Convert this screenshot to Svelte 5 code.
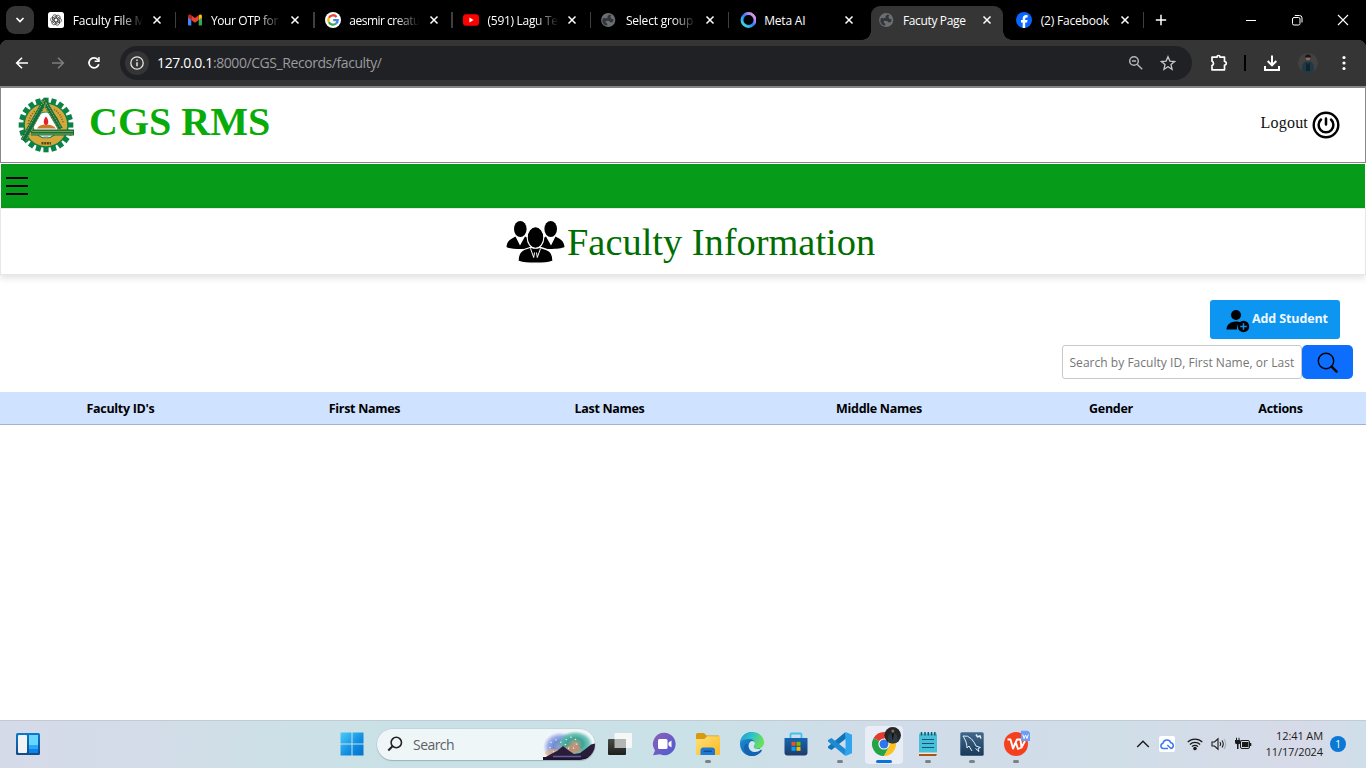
<script>
  const tabs = [
    { icon: 'gpt', title: 'Faculty File M', fade: true, ls: -0.2, sep: true },
    { icon: 'gmail', title: 'Your OTP for', fade: true, ls: -0.4, sep: true },
    { icon: 'google', title: 'aesmir creatu', fade: true, ls: -0.5, sep: true },
    { icon: 'youtube', title: '(591) Lagu Te', fade: true, ls: -0.3, sep: true },
    { icon: 'globe', title: 'Select group', fade: true, ls: -0.2, sep: true },
    { icon: 'meta', title: 'Meta AI', ls: -0.2 },
    { icon: 'globe', title: 'Facuty Page', ls: -0.36, active: true },
    { icon: 'facebook', title: '(2) Facebook', ls: -0.2, sep: true }
  ];
  const columns = ["Faculty ID's", 'First Names', 'Last Names', 'Middle Names', 'Gender', 'Actions'];
  const teeth = Array.from({ length: 20 }, (_, i) => i * 18);
  const sparks = Array.from({ length: 7 }, (_, i) => i * 51);
</script>

{#snippet favicon(name)}
  <svg class="fav" viewBox="0 0 16 16">
    {#if name === 'gpt'}
      <rect width="16" height="16" rx="2.500" fill="#fff" />
      <g fill="none" stroke="#333" stroke-width=".75">
        {#each [0, 60, 120, 180, 240, 300] as a}
          <path d="M8 5.700 10 6.900V10.400a2.200 2.200 0 0 0 3.300-2.200 2.300 2.300 0 0 0-.5-1.400L9.600 5" transform="rotate({a} 8 8)" />
        {/each}
      </g>
    {:else if name === 'gmail'}
      <path d="M1 3.500v9.200c0 .5.4.8.8.8H4.300V6.500z" fill="#4285f4" />
      <path d="M15 3.500v9.200c0 .5-.4.8-.8.8H11.700V6.500z" fill="#34a853" />
      <path d="M11.700 3.500V8L15 5.600V4.200c0-1.600-1.800-2.200-2.800-1.300z" fill="#fbbc04" />
      <path d="M4.300 3.300 8 6.100l3.700-2.800V8L8 10.800 4.300 8z" fill="#ea4335" />
      <path d="M1 4.200V5.600L4.300 8V3.400l-.5-.5C2.800 2.100 1 2.700 1 4.200z" fill="#c5221f" />
    {:else if name === 'google'}
      <circle cx="8" cy="8" r="8" fill="#fff" />
      <g fill="none" stroke-width="2.300">
        <path d="M11.600 4.900A4.700 4.700 0 0 0 3.900 5.700" stroke="#ea4335" />
        <path d="M3.900 5.700a4.700 4.700 0 0 0 0 4.600" stroke="#fbbc05" />
        <path d="M3.900 10.300a4.700 4.700 0 0 0 7.200 1.200" stroke="#34a853" />
        <path d="M11.100 11.500A4.600 4.600 0 0 0 12.700 8.200H8.200" stroke="#4285f4" />
      </g>
    {:else if name === 'youtube'}
      <rect y="2.300" width="16" height="11.400" rx="3" fill="#f00" />
      <path d="m6.400 5.600 4.200 2.400-4.200 2.400z" fill="#fff" />
    {:else if name === 'globe'}
      <circle cx="7.200" cy="8" r="7.100" fill="#6b6f73" />
      <path d="M8.500 2.500 6.300 4.300 7 5.500 5 6.300 2 6 1.300 8.600c0 3 2.500 5.200 5 5V11.800L4.500 10.300 5.300 8.700 8 9 9.500 10.500 12 10 12.600 7.300 10.500 6.800 9.300 5 10.500 3.300z" fill="#26282b" opacity=".8" />
    {:else if name === 'meta'}
      <defs>
        <linearGradient id="meta" x1="0" y1="1" x2="1" y2="0">
          <stop offset="0" stop-color="#52f0c8" /><stop offset=".25" stop-color="#30b9ee" />
          <stop offset=".5" stop-color="#2b7bff" /><stop offset=".75" stop-color="#b18cf5" /><stop offset="1" stop-color="#f5a8e4" />
        </linearGradient>
      </defs>
      <circle cx="8.500" cy="8" r="6.500" fill="none" stroke="url(#meta)" stroke-width="2.900" />
    {:else}
      <circle cx="8" cy="8" r="8" fill="#0866ff" />
      <path d="M6.700 16V10.500H5V8h1.700V6.900c0-2.600 1.200-3.800 3.600-3.800.4 0 1 .1 1.300.2v2.200h-.9c-1.100 0-1.500.5-1.500 1.500v1h2.300l-.4 2.500H9.200V16z" fill="#fff" />
    {/if}
  </svg>
{/snippet}

<div class="screen">
  <div class="tabstrip">
    <button class="tabsearch" aria-label="Search tabs">
      <svg width="10" height="8" viewBox="0 0 10 8"><path d="M1.500 2 5 5.500 8.500 2" fill="none" stroke="#fff" stroke-width="1.700" /></svg>
    </button>
    {#each tabs as t}
      <div class="tab" class:active={t.active} class:sep={t.sep}>
        {@render favicon(t.icon)}
        <span class="title" class:fade={t.fade} style="letter-spacing:{t.ls}px">{t.title}</span>
        <svg class="x" width="10" height="10" viewBox="0 0 10 10"><path d="m1.500 1.500 7 7m0-7-7 7" stroke="#fff" stroke-width="1.500" /></svg>
      </div>
    {/each}
    <svg class="plus" width="12" height="12" viewBox="0 0 12 12"><path d="M6 .8v10.400M.8 6h10.400" stroke="#fff" stroke-width="1.500" /></svg>
    <div class="winctl">
      <svg width="12" height="12" viewBox="0 0 12 12"><path d="M1 6.500h10" stroke="#fff" /></svg>
      <svg width="12" height="12" viewBox="0 0 12 12" fill="none" stroke="#fff"><rect x="1.500" y="3.500" width="7.500" height="7.500" rx="1.500" /><path d="M3.800 1.500H8.500Q11 1.500 11 4V8.500" /></svg>
      <svg width="12" height="12" viewBox="0 0 12 12"><path d="m1 1 10 10M11 1 1 11" stroke="#fff" stroke-width="1.100" /></svg>
    </div>
  </div>

  <div class="toolbar">
    <svg class="nav" viewBox="0 0 16 16"><path d="M14 8H3M8 2.700 2.700 8 8 13.300" fill="none" stroke="#fff" stroke-width="1.600" /></svg>
    <svg class="nav" viewBox="0 0 16 16"><path d="M2 8h11M8 2.700 13.300 8 8 13.300" fill="none" stroke="#7d7d7d" stroke-width="1.600" /></svg>
    <svg class="nav" viewBox="0 0 16 16"><path d="M12.800 9.300A5 5 0 1 1 11.800 4.600L13 6" fill="none" stroke="#fff" stroke-width="1.700" /><path d="M13.700 2v5H8.700V5.500H12.200V2z" fill="#fff" /></svg>
    <div class="omni">
      <span class="info"><svg width="16" height="16" viewBox="0 0 16 16"><circle cx="8" cy="8" r="6.200" fill="none" stroke="#e8e8e8" stroke-width="1.300" /><path d="M8 7.200v4M8 4.500v1.500" stroke="#e8e8e8" stroke-width="1.500" /></svg></span>
      <span class="url"><b>127.0.0.1</b>:8000/CGS_Records/faculty/</span>
      <svg class="om1" width="16" height="16" viewBox="0 0 16 16" fill="none" stroke="#b4b5b7" stroke-width="1.500"><circle cx="6" cy="6" r="4.300" /><path d="m9.200 9.200 5 5M4 6h4" /></svg>
      <svg width="16" height="16" viewBox="0 0 16 16"><path d="m8 1.700 1.900 4.400 4.700.4-3.600 3.100 1.100 4.700L8 11.800l-4.100 2.500L5 9.600 1.400 6.500l4.700-.4z" fill="none" stroke="#c6c7c9" stroke-width="1.300" /></svg>
    </div>
    <svg class="ext" width="18" height="18" viewBox="0 0 18 18"><path d="M2 3.200H7V3a1.500 1.500 0 0 1 3 0v.2h4.500V7.500a1.800 1.800 0 0 1 0 3.600v4.700H2V11.600A2.300 2.300 0 0 0 2 7.300z" fill="none" stroke="#fff" stroke-width="1.700" stroke-linejoin="round" /></svg>
    <i class="vbar"></i>
    <svg class="dl" width="18" height="18" viewBox="0 0 18 18"><path d="M9 1.500v9.500M4.700 7 9 11.300 13.300 7M2 12v4h14v-4" fill="none" stroke="#fff" stroke-width="2" /></svg>
    <svg class="ava" width="20" height="20" viewBox="0 0 20 20"><circle cx="10" cy="10" r="10" fill="#424242" /><path d="M4.500 18c-1-5-.5-8 3.500-9.500h4c4 1.500 4.500 4.500 3.500 9.500-3 2.500-8 2.500-11 0z" fill="#1d3a46" /><path d="M8 9l2 3 2-3v9H8z" fill="#14222a" /><circle cx="10" cy="5" r="2.400" fill="#94685c" /><path d="M7 4.500C7 .5 13 .5 13 4.500z" fill="#151515" /></svg>
    <svg class="dots" width="4" height="16" viewBox="0 0 4 16" fill="#fff"><circle cx="2" cy="2.500" r="1.600" /><circle cx="2" cy="8" r="1.600" /><circle cx="2" cy="13.500" r="1.600" /></svg>
  </div>

  <header>
    <svg class="seal" width="56" height="56" viewBox="0 0 56 56">
      {#each teeth as a}<rect x="25.400" y=".7" width="5.200" height="6" fill="#0a8245" transform="rotate({a} 28 28)" />{/each}
      <circle cx="28" cy="28" r="22.700" fill="#0a8245" />
      <circle cx="28" cy="28" r="21.200" fill="#d4a83a" />
      <circle cx="28" cy="28" r="13.300" fill="#0a8245" />
      <circle cx="28" cy="28" r="12.500" fill="#fff" />
      <path d="M18 32 28 17l10 15z" fill="#fff" />
      <path d="M19 31.500q2-4 9-4t10 4z" fill="#c97a28" />
      <path d="M28 19.500c3.500 4 2.500 8.500 0 8.500s-3.500-4.500 0-8.500z" fill="#e2222b" />
      <g fill="none" stroke="#0e7040">
        <path d="M25 2 42.500 32" stroke-width="5" />
        <path d="M27 4 5 43.500" stroke-width="5.500" />
        <path d="M13 35.500h43" stroke-width="6" />
      </g>
      <g fill="none" stroke="#d2b552" stroke-width=".7">
        <path d="M26 2.500 43.500 32M23.500 3 41 33M25.500 4 3.500 43M28.500 6 8 43.500" stroke-dasharray="2 1" />
        <path d="M14 34.400h41M12.500 37h42.500" />
      </g>
      <path d="M10.500 27A18 18 0 0 1 17 14" stroke="#7c6a26" stroke-width="2" stroke-dasharray="1 1.700" fill="none" />
      <path d="M36 12.500q7 4 9 13" stroke="#7c6a26" stroke-width="1.800" stroke-dasharray="1 1.500" fill="none" />
      <path d="M25.500 40h5" stroke="#777" stroke-width="1" />
      <path d="M23.500 46.300h9.500" stroke="#4b4520" stroke-width="2.600" stroke-dasharray="2 .7" />
    </svg>
    <h1>CGS RMS</h1>
    <a class="logout" href="#logout">Logout</a>
    <svg class="power" width="28" height="28" viewBox="0 0 28 28" fill="none" stroke="#000"><circle cx="14" cy="14" r="12.300" stroke-width="2.400" /><path d="M9 8.500a7.400 7.400 0 1 0 10 0M14 7.500v6" stroke-width="2.500" stroke-linecap="round" /></svg>
  </header>
  <nav class="green">
    <svg width="22" height="20" viewBox="0 0 22 20"><path d="M0 2h22M0 10h22M0 18h22" stroke="#000" stroke-width="2" /></svg>
  </nav>
  <section class="heading">
    <svg width="60" height="44" viewBox="0 0 60 44">
      <g>
        <ellipse cx="14.300" cy="9" rx="6.300" ry="8" fill="#000" />
        <path d="M.5 27C1 20.500 5 19 9.500 16.500L14 25.500 19 16.500 27 21v7.500C15 29.500 4 29 .5 27z" fill="#000" />
      </g>
      <g transform="matrix(-1 0 0 1 59 0)">
        <ellipse cx="14.300" cy="9" rx="6.300" ry="8" fill="#000" />
        <path d="M.5 27C1 20.500 5 19 9.500 16.500L14 25.500 19 16.500 27 21v7.500C15 29.500 4 29 .5 27z" fill="#000" />
      </g>
      <path d="M12 41C12 31 17 29.500 24 27.500h10.500C42 29.500 47 31 47 41c-7 3-28 3-35 0z" fill="#000" stroke="#fff" stroke-width="1.300" />
      <ellipse cx="29.500" cy="17.500" rx="8.300" ry="10.700" fill="#000" stroke="#fff" stroke-width="1.100" />
      <path d="M24.500 28.500 27.700 37.500l.8-5M34.500 28.500 31.300 37.500l-.8-5" fill="none" stroke="#fff" stroke-width="1" />
    </svg>
    <h2>Faculty Information</h2>
  </section>

  <main>
    <button class="add">
      <svg width="24" height="24" viewBox="0 0 24 24"><circle cx="10" cy="6" r="5" /><path d="M.5 20.500c0-5 4-8 9.500-8 2 0 3.500.3 5 1.200a6.400 6.400 0 0 0-4 6.800z" /><circle cx="17.500" cy="17.500" r="5.700" /><path d="M17.500 14.200v6.600M14.200 17.500h6.600" stroke="#0d95f2" stroke-width="1.500" /></svg>
      <span>Add Student</span>
    </button>
    <div class="search">
      <div class="field">Search by Faculty ID, First Name, or Last</div>
      <button class="go" aria-label="Search"><svg width="22" height="22" viewBox="0 0 22 22" fill="none" stroke="#000"><circle cx="9" cy="9" r="7.700" stroke-width="1.400" /><path d="m14.600 14.600 5 5" stroke-width="2.400" stroke-linecap="round" /></svg></button>
    </div>
    <div class="thead">
      {#each columns as c}<span>{c}</span>{/each}
    </div>
  </main>

  <footer>
    <svg class="widgets" width="24" height="22" viewBox="0 0 24 22">
      <defs><linearGradient id="wd" x1="0" y1="0" x2="0" y2="1"><stop offset="0" stop-color="#0b79d0" /><stop offset="1" stop-color="#134a87" /></linearGradient></defs>
      <rect width="24" height="22" rx="1.500" fill="url(#wd)" /><rect x="2" y="2" width="9" height="18" rx="1" fill="#f3f3f3" /><rect x="13" y="2" width="9" height="10" fill="#67d7fe" /><rect x="13" y="12" width="9" height="4" fill="#28a8f8" /><rect x="13" y="16" width="9" height="4" fill="#0a83ea" />
    </svg>
    <svg class="start" width="24" height="24" viewBox="0 0 24 24">
      <defs><linearGradient id="win" x1="0" y1="0" x2="1" y2="1"><stop offset="0" stop-color="#4ccbfb" /><stop offset=".6" stop-color="#0f8ce0" /><stop offset="1" stop-color="#0470cb" /></linearGradient></defs>
      <path d="M.5.500h11v11h-11zM12.500.5h11v11h-11zM.5 12.500h11v11H.5zM12.500 12.500h11v11h-11z" fill="url(#win)" />
    </svg>
    <div class="pill">
      <svg width="16" height="16" viewBox="0 0 16 16"><circle cx="9.300" cy="6.500" r="5.200" fill="none" stroke="#222" stroke-width="1.600" /><path d="M5.500 10.300 1.300 14.500" stroke="#222" stroke-width="2" /></svg>
      <span>Search</span>
      <svg class="art" width="52" height="31" viewBox="0 0 52 31">
        <defs>
          <radialGradient id="a1"><stop offset="0" stop-color="#a8a0b8" /><stop offset=".4" stop-color="#6d8cd6" /><stop offset=".7" stop-color="#7b90e0" stop-opacity=".75" /><stop offset="1" stop-color="#8f9cea" stop-opacity="0" /></radialGradient>
          <radialGradient id="a2"><stop offset="0" stop-color="#c99b80" /><stop offset=".45" stop-color="#3ba596" /><stop offset=".75" stop-color="#52b5a8" stop-opacity=".8" /><stop offset="1" stop-color="#45bba8" stop-opacity="0" /></radialGradient>
        </defs>
        <ellipse cx="17" cy="18" rx="17" ry="15" fill="url(#a1)" /><ellipse cx="32" cy="15" rx="18" ry="13" fill="url(#a2)" />
        <ellipse cx="10" cy="24" rx="8" ry="4" fill="#eab070" opacity=".6" /><ellipse cx="30" cy="20" rx="8" ry="4" fill="#e58a70" opacity=".7" />
        <g stroke="#fff2c8" stroke-width="1">
          {#each sparks as a}<path d="M13 11.500V10" transform="rotate({a} 13 17)" /><path d="M28 9V7.500" transform="rotate({a} 28 14)" />{/each}
        </g>
        <path d="M0 29.500 8 25l6-3 6-5 5 4 6 4 6-1 6-4.500 5-4 4-1V29.500z" fill="#2a1d3c" /><path d="M0 28h46q-3 3-8 3H0z" fill="#1d1830" /><path d="M10 27.500h28" stroke="#6a5c98" stroke-width="1.300" fill="none" />
      </svg>
    </div>

    <div class="apps">
      <span class="app"><svg width="24" height="24" viewBox="0 0 24 24"><defs><linearGradient id="tv" x1="0" y1="0" x2="0" y2="1"><stop offset="0" stop-color="#4a4a48" /><stop offset="1" stop-color="#1e1e1c" /></linearGradient></defs><rect x="6.500" y="1" width="17.500" height="15" rx="1" fill="#f7f7f7" /><rect x="0" y="7" width="18" height="16" rx="1" fill="url(#tv)" /><path d="M6.500 7H18v9H6.500z" fill="#b4b6b6" /></svg></span>
      <span class="app"><svg width="24" height="24" viewBox="0 0 24 24"><defs><linearGradient id="ch" x1="0" y1="0" x2="1" y2="1"><stop offset="0" stop-color="#8d5fb5" /><stop offset="1" stop-color="#4c5bd4" /></linearGradient></defs><path d="M12.500.8a11.200 11.200 0 1 1-4.500 21.500L1 23.300 3 18.500A11.200 11.200 0 0 1 12.500.8z" fill="url(#ch)" /><rect x="6" y="7" width="9.500" height="10" rx="1.500" fill="#fff" /><path d="m16.500 10.500 3-2v7l-3-2z" fill="#fff" /></svg></span>
      <span class="app run"><svg width="24" height="24" viewBox="0 0 24 24"><defs><linearGradient id="fo" x1="0" y1="0" x2="1" y2="1"><stop offset="0" stop-color="#ffe07a" /><stop offset="1" stop-color="#fbb920" /></linearGradient></defs><path d="M0 2.500Q0 1 1.500 1H8l2.500 2.500H23v6H0z" fill="#d79a12" /><path d="M0 7h8.500L11 4.300h12q1 0 1 1V22q0 1-1 1H1q-1 0-1-1z" fill="url(#fo)" /><path d="M4.500 23v-4.500q0-3 3-3h8.500q3 0 3 3V23z" fill="#1f77d0" /><rect x="7.500" y="18.500" width="8.500" height="1.600" rx=".8" fill="#114f95" /></svg></span>
      <span class="app"><svg width="24" height="24" viewBox="0 0 24 24"><defs><linearGradient id="e1" x1="0" y1="0" x2="1" y2=".4"><stop offset="0" stop-color="#1b9ad8" /><stop offset=".5" stop-color="#2fc2c8" /><stop offset="1" stop-color="#6ae05a" /></linearGradient><linearGradient id="e2" x1="0" y1="0" x2="1" y2="1"><stop offset="0" stop-color="#2195dc" /><stop offset="1" stop-color="#0c4f9c" /></linearGradient></defs><path d="M0 12C0 5 5 0 12 0s8 24 10.500 17.500C20.500 21.500 16.500 24 12 24 5 24 0 18.500 0 12z" fill="url(#e2)" /><path d="M.2 10C1.500 4 6 0 12 0c7 0 12 5 12 10.500 0 4-3 6.200-6.200 6.200-2.600 0-4-1-4-1.800s1.200-1.300 1.200-3.200C15 9 12.500 7 9 7 5 7 1.500 8.500.2 10z" fill="url(#e1)" /><path d="M15 11.500c0 2-1.200 2.500-1.200 3.400 0 .9 1.500 2 4 2 1.800 0 3.300-.6 4.400-1.500-1.500 3.400-5 5-8.200 4.600-3.500-.5-5.500-3.500-5.500-6.300 0-2.400 1.500-4.200 3.500-4.700 2 .2 3 1.200 3 2.500z" fill="#d3e6ed" /><path d="M8.500 11.500c-1.500 5 1.500 9 5.500 9 3 .3 6-.7 8.300-3.200C20.300 21.300 16.500 24 12 24 6 24 3 19 4 15c.5-2 2-3.200 4.500-3.500z" fill="#1464b4" /></svg></span>
      <span class="app"><svg width="24" height="24" viewBox="0 0 24 24"><defs><linearGradient id="st" x1="0" y1="0" x2="0" y2="1"><stop offset="0" stop-color="#1268b4" /><stop offset="1" stop-color="#203a68" /></linearGradient></defs><path d="M6.500 7V2.500q0-1 1-1h9q1 0 1 1V7" fill="none" stroke="#3cc4f0" stroke-width="1.800" /><path d="M.5 6h23v14.500q0 3-3 3h-17q-3 0-3-3z" fill="url(#st)" /><path d="M7.500 9.800h4v4h-4z" fill="#f25022" /><path d="M12.500 9.800h4v4h-4z" fill="#7fba00" /><path d="M7.500 14.800h4v4h-4z" fill="#00a4ef" /><path d="M12.500 14.800h4v4h-4z" fill="#ffb900" /></svg></span>
      <span class="app run"><svg width="24" height="24" viewBox="0 0 24 24"><path d="M17.500 0 18 6.500 3.500 18 0 16v-1.500z" fill="#1173b8" /><path d="M17.500 24 18 17.500 3.500 6 0 8v1.500z" fill="#1e8ad2" /><path d="m17.500 0 6.500 2.700v18.600L17.500 24z" fill="#2fa5ee" /></svg></span>
      <span class="app cur"><svg width="38" height="38" viewBox="0 0 38 38">
        <path d="M19 19 8.600 13A12 12 0 0 1 29.400 13z" fill="#e33b2e" /><path d="M19 19 8.600 13A12 12 0 0 0 19 31l5-9z" fill="#24a347" /><path d="M19 31a12 12 0 0 0 10.400-18H19l5 9z" fill="#fcc31e" /><circle cx="19" cy="19" r="5.600" fill="#fff" /><circle cx="19" cy="19" r="4.500" fill="#2f76ea" />
        <circle cx="27.700" cy="10.300" r="8.300" fill="#262626" /><path d="M23 17c-.5-5 .5-8 3-8.500h3.500c2.500.5 3.500 3.500 3 8.500q-4.500 2.500-9.500 0z" fill="#2c3c44" /><path d="m26.500 8.500 1.300 7 1.300-7z" fill="#111" /><circle cx="27.800" cy="6" r="1.500" fill="#8a685c" /></svg></span>
      <span class="app run"><svg width="24" height="24" viewBox="0 0 24 24"><rect x="3" y="1.500" width="18" height="20" rx="1" fill="#45bfda" /><path d="M5.500 0v3.500M9 0v3.500M12.300 0v3.500M15.600 0v3.500M18.800 0v3.500" stroke="#14576c" stroke-width="1.500" /><path d="M6 7.500h12M6 11.500h12M6 15.500h12" stroke="#14576c" stroke-width="1.200" /><path d="M3 20.500h18V22H3z" fill="#f3e7d3" /><path d="M3 22h18l-1 2H3z" fill="#a9531c" /></svg></span>
      <span class="app run"><svg width="24" height="24" viewBox="0 0 24 24"><defs><linearGradient id="my" x1="0" y1="0" x2="0" y2="1"><stop offset="0" stop-color="#40688c" /><stop offset="1" stop-color="#183a5a" /></linearGradient></defs><rect x=".3" y=".3" width="23.400" height="23.400" rx="1.500" fill="url(#my)" /><path d="M3 4q5-1 8.500 3T16 14l4.500 1.500-2.500 1 1 3-3.500-3M3 4q2 3 3 6t1 6l2-2 3 5" fill="none" stroke="#e4edf4" stroke-width="1" /><path d="m16 2.500 1.500 2.300L20 4l1 2.500" stroke="#e4edf4" stroke-width="1.500" fill="none" /></svg></span>
      <span class="app run"><svg width="28" height="28" viewBox="0 0 28 28"><circle cx="14" cy="14" r="12" fill="#f5401f" /><path d="M5.500 9.500h3l2.500 9 4-9h3.500l1 8 3.500-6.500M11 18.500l2-5M19.500 17.500 16 19l-2-6" fill="none" stroke="#fff" stroke-width="1.900" stroke-linejoin="round" /><path d="M19 .8h7l2 2V11h-9z" fill="#6b9ff5" /><path d="m20.800 4.500 1.300 4 1.400-3.500L25 8.500l1.300-4" fill="none" stroke="#fff" stroke-width="1" /></svg></span>
    </div>

    <div class="tray">
      <svg width="14" height="10" viewBox="0 0 14 10"><path d="M1.200 8 7 2.200 12.800 8" fill="none" stroke="#1b1b1b" stroke-width="1.400" /></svg>
      <svg class="cloud" width="16" height="16" viewBox="0 0 16 16"><rect width="16" height="16" rx="2" fill="#fff" /><path d="M9 12.500H4.200A2.700 2.700 0 0 1 4 7.200a4 4 0 0 1 7.700-.4A2.900 2.900 0 0 1 12 12.500L8.300 9" fill="none" stroke="#3a78f2" stroke-width="1.500" stroke-linejoin="round" /></svg>
      <svg class="wifi" width="16" height="14" viewBox="0 0 16 14" fill="none" stroke="#1b1b1b" stroke-width="1.200"><path d="M.7 5.200a10.300 10.300 0 0 1 14.600 0M2.900 7.500a7.200 7.200 0 0 1 10.200 0M5 9.700a4.200 4.200 0 0 1 6 0" /><circle cx="8" cy="11.500" r="1.200" fill="#1b1b1b" /></svg>
      <svg class="vol" width="16" height="14" viewBox="0 0 16 14" fill="none" stroke="#1b1b1b" stroke-width="1.100"><path d="M1 5h2.500L7 1.800v10.400L3.500 9H1zM9 5q1.400 2 0 4M11 3.500q2.500 3.500 0 7" /><path d="M13 2q3.500 5 0 10" stroke="#a8aeb6" /></svg>
      <svg class="bat" width="17" height="14" viewBox="0 0 17 14"><rect x="5.500" y="3.500" width="9" height="8" rx="1.500" fill="none" stroke="#1b1b1b" /><path d="M7 5h6.500v5H7zM15 6h1.300v3H15zM0 3h5.500v2.500q0 1.500-2 1.700V12H2V7.200Q0 7 0 5.500zM1 .8h1V3H1zM3.500.8h1V3h-1z" fill="#1b1b1b" /></svg>
      <div class="clock"><span>12:41 AM</span><span>11/17/2024</span></div>
      <span class="badge">1</span>
    </div>
  </footer>
</div>

<style>
  :global(body) { margin: 0; overflow: hidden; }
  * { box-sizing: border-box; }
  svg { display: block; flex: none; }
  button { border: 0; padding: 0; font: inherit; }
  .screen { width: 1366px; height: 768px; display: flex; flex-direction: column; background: #fff; font-family: "Open Sans", "Noto Sans", sans-serif; overflow: hidden; }

  .tabstrip { height: 40px; background: #000; display: flex; align-items: center; flex: none; position: relative; z-index: 1; }
  .tabsearch { width: 28px; height: 28px; margin: 0 4px 0 6px; border-radius: 9px; background: #353535; display: grid; place-items: center; }
  .tab { width: 138.300px; height: 34px; align-self: flex-end; display: flex; align-items: center; padding: 0 0 6px 10.300px; position: relative; flex: none; }
  .fav { width: 16px; height: 16px; }
  .title { width: 72px; margin: 1px 0 0 8.400px; font-size: 12px; line-height: 18px; color: #fff; white-space: nowrap; }
  .title.fade { -webkit-mask-image: linear-gradient(90deg, #000 65%, transparent 98%); mask-image: linear-gradient(90deg, #000 65%, transparent 98%); }
  .x { margin-left: 7.500px; }
  .tab.sep::after { content: ""; position: absolute; right: 0; top: 6px; width: 1.500px; height: 16px; background: #3f3f3f; }
  .tab.active { background: #353535; border-radius: 9px 9px 0 0; width: 132.300px; margin: 0 3px; padding-left: 7.800px; }
  .tab.active .x { margin-left: 7px; }
  .tab.active::before, .tab.active::after { content: ""; position: absolute; bottom: 0; width: 9px; height: 9px; }
  .tab.active::before { left: -9px; background: radial-gradient(circle at 0 0, transparent 8.500px, #353535 9px); }
  .tab.active::after { right: -9px; background: radial-gradient(circle at 100% 0, transparent 8.500px, #353535 9px); }
  .plus { margin-left: 10.500px; }
  .winctl { margin-left: auto; display: flex; gap: 34px; padding-right: 17px; }

  .toolbar { height: 46px; background: radial-gradient(circle at 8px 8px, #353535 8px, #000 8.500px) 0 0 / 8px 8px no-repeat, radial-gradient(circle at 0 8px, #353535 8px, #000 8.500px) 100% 0 / 8px 8px no-repeat, #353535; display: flex; align-items: center; flex: none; padding-left: 14px; }
  .nav { width: 16px; height: 16px; margin-right: 20px; }
  .omni { width: 1072px; height: 34px; margin-left: -2px; border-radius: 17px; background: #202124; display: flex; align-items: center; padding-left: 5px; padding-right: 16px; }
  .info { width: 24px; height: 24px; border-radius: 50%; background: #353535; display: grid; place-items: center; }
  .url { margin-left: 8px; font-size: 14px; line-height: 20px; color: #9a9b9e; letter-spacing: -.43px; white-space: nowrap; }
  .url b { font-weight: 400; color: #fff; letter-spacing: -.35px; }
  .om1 { margin: 0 16px 0 auto; }
  .ext { margin-left: 18px; }
  .vbar { width: 2px; height: 16px; background: #000; margin-left: 16px; }
  .dl { margin-left: 17px; }
  .ava { margin-left: 17px; }
  .dots { margin-left: 24px; }

  header { height: 77px; border: 1px solid #8c8888; border-top: 2px solid #858585; display: flex; padding-left: 17px; flex: none; }
  .seal { margin-top: 9px; }
  h1 { margin: 10px 0 0 15px; font: bold 40px/48px "Liberation Serif", serif; color: #08ab08; white-space: nowrap; }
  .logout { margin: 25px 0 0 auto; font: 16px/20px "Liberation Serif", serif; letter-spacing: .2px; color: #111; text-decoration: none; }
  .power { margin: 23px 25px 0 4px; }

  .green { height: 44px; margin: 1px 1px 0; background: #079b1a; padding: 12px 5px; flex: none; }
  .heading { height: 67px; border: 1px solid #e8e6e6; box-shadow: 0 3px 7px rgba(0, 0, 0, .12); display: flex; padding-left: 505px; flex: none; }
  .heading svg { margin-top: 11px; }
  h2 { margin: 11px 0 0 1px; font: 400 38.400px/44px "Liberation Serif", serif; color: #006d00; white-space: nowrap; }

  main { flex: 1; display: flex; flex-direction: column; align-items: flex-end; }
  .add { width: 130px; height: 39px; margin: 25px 26px 0 0; background: #0d95f2; border-radius: 3px; display: flex; padding-left: 16px; align-items: center; color: #f1f7fc; }
  .add svg { margin-top: 3px; }
  .add span { font-size: 12.500px; font-weight: 700; margin: -2px 0 0 2px; letter-spacing: -.12px; white-space: nowrap; }
  .search { display: flex; margin: 6px 13px 0 0; }
  .field { width: 240px; height: 34px; border: 1px solid #c9c9c9; border-radius: 3px; padding-left: 6.500px; font-size: 12px; line-height: 33px; color: #757575; white-space: nowrap; letter-spacing: .03px; }
  .go { width: 51px; height: 34px; background: #0d6efd; border-radius: 5px; display: grid; place-items: center; }
  .go svg { margin-top: 2px; }
  .thead { width: 100%; height: 33px; margin-top: 13px; background: #cfe2ff; border-bottom: 1px solid #a3b3cc; display: grid; grid-template-columns: 241px 247px 243px 296px 168px 171px; align-items: center; text-align: center; font-weight: 700; font-size: 12.500px; letter-spacing: -.3px; color: #000; }

  footer { height: 48px; flex: none; border-top: 1px solid #c2cad3; display: flex; align-items: center; padding-bottom: 1px; background: linear-gradient(90deg, #d5dae8 0, #d3dce8 150px, #cce1e7 300px, #c9e1e6 400px, #cae1e7 680px, #d0dce9 900px, #d0dee8 1120px, #d7dae8 1300px, #cfdfe9 1366px); }
  .widgets { margin-left: 16px; }
  .start { margin-left: 299.500px; }
  .pill { width: 218px; height: 31px; margin-left: 13.500px; border-radius: 16px; background: #eff6f8; box-shadow: 0 1px 1px #9fb2b9, 0 0 0 .5px #b9ccd2; display: flex; align-items: center; padding-left: 10px; overflow: hidden; }
  .pill span { font-size: 14px; color: #5e6163; margin-left: 10px; letter-spacing: -.55px; }
  .art { margin-left: auto; }
  .apps { display: flex; margin-left: 2.500px; }
  .app { width: 44px; height: 47px; display: grid; place-items: center; position: relative; }
  .app.run::after { content: ""; position: absolute; left: 19px; bottom: 5px; width: 6px; height: 3px; border-radius: 2px; background: #7c8186; }
  .app.cur::before { content: ""; position: absolute; left: 3px; top: 5px; width: 38px; height: 38px; border-radius: 4px; background: #e9eef6; }
  .app.cur::after { content: ""; position: absolute; left: 14px; bottom: 5px; width: 16px; height: 3px; border-radius: 2px; background: #0a74d6; }
  .app svg { position: relative; }
  .tray { margin-left: auto; display: flex; align-items: center; padding-right: 20px; }
  .cloud { margin-left: 9px; }
  .wifi { margin-left: 12px; }
  .vol { margin-left: 8px; }
  .bat { margin-left: 8px; }
  .clock { display: flex; flex-direction: column; align-items: flex-end; width: 71px; font-size: 11px; line-height: 16px; letter-spacing: -.1px; color: #1b1b1b; white-space: nowrap; }
  .badge { width: 16px; height: 16px; margin-left: 7px; border-radius: 50%; background: #0a78d4; color: #fff; font-size: 10px; line-height: 16px; text-align: center; }
</style>
